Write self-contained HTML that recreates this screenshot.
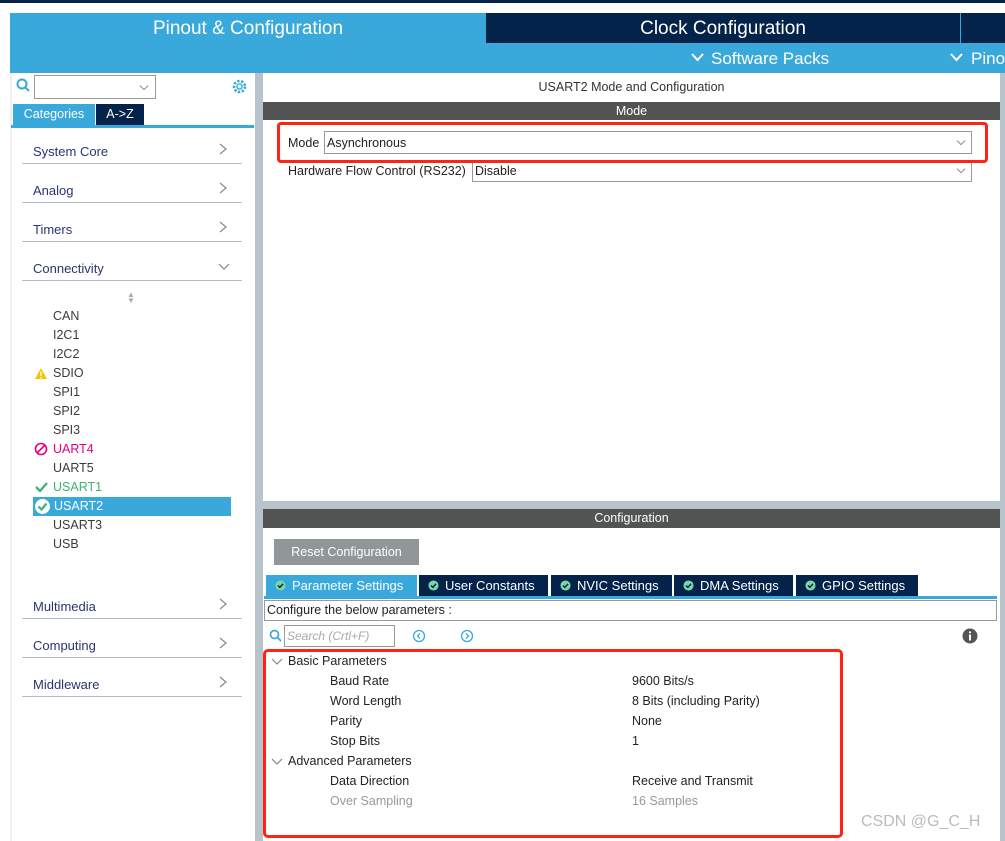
<!DOCTYPE html>
<html><head><meta charset="utf-8"><style>
*{margin:0;padding:0;box-sizing:border-box}
body{width:1005px;height:841px;position:relative;overflow:hidden;background:#fff;font-family:"Liberation Sans",sans-serif;}
.a{position:absolute}
.cat{position:absolute;left:33px;font-size:13px;color:#2a3470}
.line{position:absolute;left:22px;width:220px;height:1px;background:#b5bec6}
.chev{position:absolute;left:218px}
.it{position:absolute;left:53px;font-size:12.5px;color:#3b3b3b}
.t{position:absolute;font-size:12.5px;color:#222}
.tab{position:absolute;top:575px;height:21px;background:#03234b;color:#fff;font-size:13px;line-height:21px;padding-left:9px}
.ck{display:inline-block;width:11px;height:11px;margin-right:6px;vertical-align:-1px}
</style></head><body>
<svg width="0" height="0" style="position:absolute"><defs>
<symbol id="r" viewBox="0 0 10 12"><polyline points="2,1 8,6 2,11" fill="none" stroke="#888" stroke-width="1.2"/></symbol>
<symbol id="d" viewBox="0 0 12 10"><polyline points="1,2 6,7 11,2" fill="none" stroke="#888" stroke-width="1.2"/></symbol>
<symbol id="c" viewBox="0 0 12 12"><circle cx="6" cy="6" r="5.5" fill="#7ad6a6"/><polyline points="3.3,6 5.3,8 8.8,4.2" fill="none" stroke="#03234b" stroke-width="1.6"/></symbol>
</defs></svg>
<div class="a" style="left:0;top:0;width:1005px;height:3px;background:#03234b"></div>
<div class="a" style="left:10px;top:13px;width:995px;height:60px;background:#39a9db"></div>
<div class="a" style="left:10px;top:13px;width:476px;height:30px;color:#fff;font-size:19px;text-align:center;line-height:31px">Pinout &amp; Configuration</div>
<div class="a" style="left:486px;top:13px;width:474px;height:30px;background:#03234b;color:#fff;font-size:19px;text-align:center;line-height:31px">Clock Configuration</div>
<div class="a" style="left:961px;top:13px;width:44px;height:30px;background:#03234b"></div>
<svg class="a" style="left:691px;top:53px" width="13" height="9"><polyline points="1,1 6.5,7 12,1" fill="none" stroke="#fff" stroke-width="2"/></svg>
<div class="a" style="left:711px;top:49px;color:#fff;font-size:17px">Software Packs</div>
<svg class="a" style="left:950px;top:53px" width="13" height="9"><polyline points="1,1 6.5,7 12,1" fill="none" stroke="#fff" stroke-width="2"/></svg>
<div class="a" style="left:971px;top:49px;color:#fff;font-size:17px">Pino</div>

<!-- left panel -->
<div class="a" style="left:10px;top:73px;width:2px;height:768px;background:#eef0f2"></div>
<svg class="a" style="left:16px;top:78px" width="16" height="16"><circle cx="6" cy="6" r="4.5" fill="none" stroke="#39a9db" stroke-width="2"/><line x1="9" y1="9" x2="13" y2="13" stroke="#39a9db" stroke-width="2"/></svg>
<div class="a" style="left:34px;top:75px;width:122px;height:24px;border:1px solid #999"></div>
<svg class="a" style="left:138px;top:84px" width="12" height="8"><use href="#d"/></svg>
<svg class="a" style="left:231px;top:78px" width="17" height="17"><circle cx="8.5" cy="8.5" r="5.5" fill="none" stroke="#39a9db" stroke-width="2.6" stroke-dasharray="2.4 1.5"/><circle cx="8.5" cy="8.5" r="2.6" fill="none" stroke="#39a9db" stroke-width="1.4"/></svg>
<div class="a" style="left:13px;top:104px;width:82px;height:21px;background:#39a9db;color:#fff;font-size:12.5px;text-align:center;line-height:21px">Categories</div>
<div class="a" style="left:96px;top:104px;width:48px;height:21px;background:#03234b;color:#fff;font-size:12.5px;text-align:center;line-height:21px">A-&gt;Z</div>
<div class="a" style="left:11px;top:125px;width:243px;height:3px;background:#39a9db"></div>

<div class="cat" style="top:144px">System Core</div><svg class="chev" style="top:143px" width="10" height="12"><use href="#r"/></svg><div class="line" style="top:163px"></div>
<div class="cat" style="top:183px">Analog</div><svg class="chev" style="top:182px" width="10" height="12"><use href="#r"/></svg><div class="line" style="top:202px"></div>
<div class="cat" style="top:222px">Timers</div><svg class="chev" style="top:221px" width="10" height="12"><use href="#r"/></svg><div class="line" style="top:241px"></div>
<div class="cat" style="top:261px">Connectivity</div><svg class="chev" style="top:262px" width="12" height="10"><use href="#d"/></svg><div class="line" style="top:280px"></div>
<div class="a" style="left:127px;top:292px;font-size:8px;color:#aaa;line-height:6px">&#9650;<br>&#9660;</div>
<div class="it" style="top:309px">CAN</div>
<div class="it" style="top:328px">I2C1</div>
<div class="it" style="top:347px">I2C2</div>
<svg class="a" style="left:34px;top:367px" width="14" height="13"><polygon points="7,1 13,12 1,12" fill="#f5c400"/><rect x="6.3" y="4.5" width="1.4" height="4.5" fill="#fff"/><rect x="6.3" y="10" width="1.4" height="1.3" fill="#fff"/></svg>
<div class="it" style="top:366px">SDIO</div>
<div class="it" style="top:385px">SPI1</div>
<div class="it" style="top:404px">SPI2</div>
<div class="it" style="top:423px">SPI3</div>
<svg class="a" style="left:34px;top:442px" width="14" height="14"><circle cx="7" cy="7" r="5.5" fill="none" stroke="#e6007e" stroke-width="1.6"/><line x1="3" y1="11" x2="11" y2="3" stroke="#e6007e" stroke-width="1.6"/></svg>
<div class="it" style="top:442px;color:#e6007e">UART4</div>
<div class="it" style="top:461px">UART5</div>
<svg class="a" style="left:34px;top:480px" width="14" height="14"><polyline points="2,7 6,11 13,3" fill="none" stroke="#3cb371" stroke-width="2.3"/></svg>
<div class="it" style="top:480px;color:#3cb371">USART1</div>
<div class="a" style="left:33px;top:497px;width:198px;height:19px;background:#39a9db"></div>
<svg class="a" style="left:34px;top:498px" width="17" height="17"><circle cx="8.5" cy="8.5" r="7.5" fill="#fff"/><polyline points="4.5,8.5 7.5,11.5 12.5,5.5" fill="none" stroke="#3cb371" stroke-width="2.2"/></svg>
<div class="it" style="top:499px;left:54px;color:#fff">USART2</div>
<div class="it" style="top:518px">USART3</div>
<div class="it" style="top:537px">USB</div>

<div class="cat" style="top:599px">Multimedia</div><svg class="chev" style="top:598px" width="10" height="12"><use href="#r"/></svg><div class="line" style="top:618px"></div>
<div class="cat" style="top:638px">Computing</div><svg class="chev" style="top:637px" width="10" height="12"><use href="#r"/></svg><div class="line" style="top:657px"></div>
<div class="cat" style="top:677px">Middleware</div><svg class="chev" style="top:676px" width="10" height="12"><use href="#r"/></svg><div class="line" style="top:696px"></div>

<!-- dividers -->
<div class="a" style="left:255px;top:73px;width:8px;height:768px;background:#b8c4cb"></div>
<div class="a" style="left:1000px;top:73px;width:5px;height:768px;background:#b8c4cb"></div>
<div class="a" style="left:263px;top:501px;width:737px;height:8px;background:#b8c4cb"></div>

<!-- mode -->
<div class="a" style="left:263px;top:80px;width:737px;text-align:center;font-size:12.5px;color:#333">USART2 Mode and Configuration</div>
<div class="a" style="left:263px;top:102px;width:737px;height:18px;background:#525453;color:#fff;font-size:12.5px;text-align:center;line-height:18px">Mode</div>
<div class="t" style="left:288px;top:136px">Mode</div>
<div class="a" style="left:324px;top:131px;width:648px;height:23px;border:1px solid #999;font-size:12.5px;color:#222;padding:4px 2px">Asynchronous</div>
<svg class="a" style="left:955px;top:139px" width="12" height="8"><use href="#d"/></svg>
<div class="t" style="left:288px;top:164px">Hardware Flow Control (RS232)</div>
<div class="a" style="left:472px;top:160px;width:500px;height:22px;border:1px solid #999;font-size:12.5px;color:#222;padding:3px 2px">Disable</div>
<svg class="a" style="left:955px;top:167px" width="12" height="8"><use href="#d"/></svg>
<div class="a" style="left:277px;top:122px;width:711px;height:41px;border:3px solid #ff2316;border-radius:4px"></div>

<!-- config -->
<div class="a" style="left:263px;top:509px;width:737px;height:19px;background:#525453;color:#fff;font-size:12.5px;text-align:center;line-height:19px">Configuration</div>
<div class="a" style="left:274px;top:539px;width:145px;height:26px;background:#919699;color:#fff;font-size:12.5px;text-align:center;line-height:26px">Reset Configuration</div>
<div class="tab" style="left:266px;width:151px;background:#39a9db"><svg class="ck"><use href="#c"/></svg>Parameter Settings</div>
<div class="tab" style="left:419px;width:129px"><svg class="ck"><use href="#c"/></svg>User Constants</div>
<div class="tab" style="left:551px;width:121px"><svg class="ck"><use href="#c"/></svg>NVIC Settings</div>
<div class="tab" style="left:674px;width:119px"><svg class="ck"><use href="#c"/></svg>DMA Settings</div>
<div class="tab" style="left:796px;width:122px"><svg class="ck"><use href="#c"/></svg>GPIO Settings</div>
<div class="a" style="left:264px;top:596px;width:733px;height:3px;background:#39a9db"></div>
<div class="a" style="left:264px;top:600px;width:733px;height:21px;border:1px solid #999;font-size:12.5px;color:#222;padding:2px 2px">Configure the below parameters :</div>
<svg class="a" style="left:269px;top:629px" width="14" height="14"><circle cx="5.5" cy="5.5" r="4" fill="none" stroke="#39a9db" stroke-width="1.7"/><line x1="8.5" y1="8.5" x2="12" y2="12" stroke="#39a9db" stroke-width="1.7"/></svg>
<div class="a" style="left:284px;top:625px;width:111px;height:22px;border:1px solid #999;font-size:12px;color:#aaa;font-style:italic;padding:3px 2px">Search (Crtl+F)</div>
<svg class="a" style="left:412px;top:629px" width="14" height="14"><circle cx="7" cy="7" r="5.5" fill="none" stroke="#39a9db" stroke-width="1.3"/><polyline points="8,4.5 5.5,7 8,9.5" fill="none" stroke="#39a9db" stroke-width="1.3"/></svg>
<svg class="a" style="left:460px;top:629px" width="14" height="14"><circle cx="7" cy="7" r="5.5" fill="none" stroke="#39a9db" stroke-width="1.3"/><polyline points="6,4.5 8.5,7 6,9.5" fill="none" stroke="#39a9db" stroke-width="1.3"/></svg>
<svg class="a" style="left:962px;top:628px" width="16" height="16"><circle cx="8" cy="8" r="7.5" fill="#555"/><rect x="7" y="6.5" width="2" height="6" fill="#fff"/><circle cx="8" cy="4.3" r="1.1" fill="#fff"/></svg>

<svg class="a" style="left:271px;top:657px" width="12" height="10"><use href="#d"/></svg>
<div class="t" style="left:288px;top:654px">Basic Parameters</div>
<div class="t" style="left:330px;top:674px">Baud Rate</div><div class="t" style="left:632px;top:674px">9600 Bits/s</div>
<div class="t" style="left:330px;top:694px">Word Length</div><div class="t" style="left:632px;top:694px">8 Bits (including Parity)</div>
<div class="t" style="left:330px;top:714px">Parity</div><div class="t" style="left:632px;top:714px">None</div>
<div class="t" style="left:330px;top:734px">Stop Bits</div><div class="t" style="left:632px;top:734px">1</div>
<svg class="a" style="left:271px;top:757px" width="12" height="10"><use href="#d"/></svg>
<div class="t" style="left:288px;top:754px">Advanced Parameters</div>
<div class="t" style="left:330px;top:774px">Data Direction</div><div class="t" style="left:632px;top:774px">Receive and Transmit</div>
<div class="t" style="left:330px;top:794px;color:#999">Over Sampling</div><div class="t" style="left:632px;top:794px;color:#999">16 Samples</div>
<div class="a" style="left:263px;top:649px;width:580px;height:189px;border:3px solid #ff2316;border-radius:5px"></div>
<div class="a" style="left:861px;top:813px;font-size:16px;color:#bbb">CSDN @G_C_H</div>
</body></html>
